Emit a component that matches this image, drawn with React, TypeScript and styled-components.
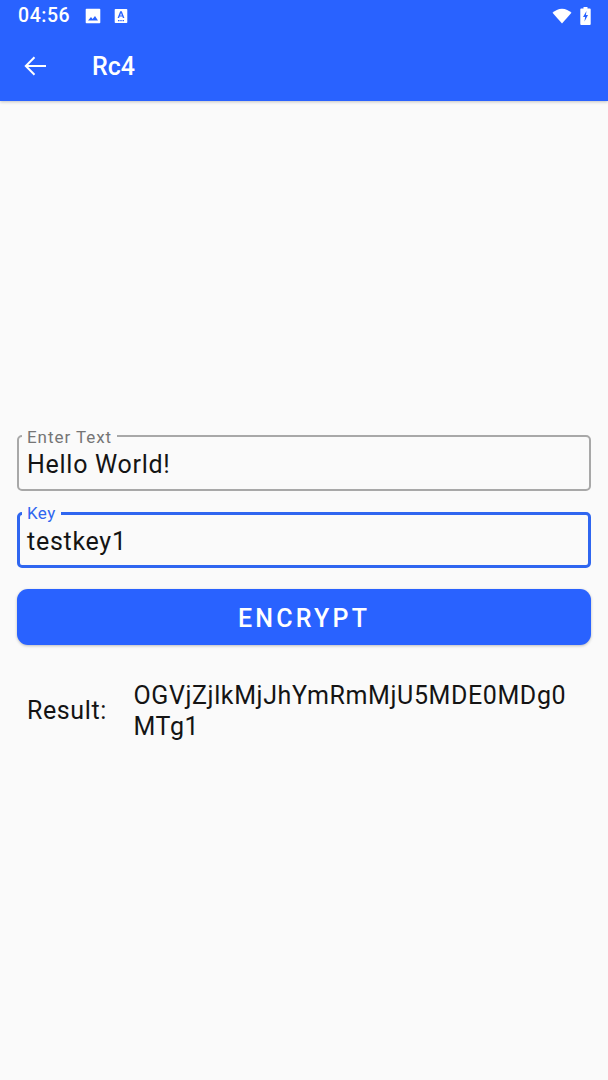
import React from "react";
import styled, { createGlobalStyle } from "styled-components";

const Global = createGlobalStyle`
  html, body { margin: 0; padding: 0; background: #fafafa; }
  body { font-family: Roboto, "Liberation Sans", sans-serif; }
`;

const Page = styled.div`
  width: 608px;
  height: 1080px;
  overflow: hidden;
  background: #fafafa;
  display: flex;
  flex-direction: column;
`;

const Header = styled.header`
  height: 101px;
  background: #2962ff;
  box-shadow: 0 1px 3px rgba(0, 0, 0, 0.22);
  display: flex;
  flex-direction: column;
  color: #fff;
`;

const StatusBar = styled.div`
  height: 32px;
  display: flex;
  align-items: center;
  padding: 0 17px 0 18px;
`;

const Time = styled.span`
  font-size: 19.5px;
  font-weight: 500;
  letter-spacing: 0.55px;
  line-height: 32px;
  width: 67px;
`;

const ImageIcon = styled.svg`
  width: 16px;
  height: 16px;
  display: block;
`;

const AccessIcon = styled.svg`
  width: 14px;
  height: 16px;
  margin-left: 13px;
  display: block;
`;

const StatusRight = styled.div`
  margin-left: auto;
  display: flex;
  align-items: center;
  gap: 8px;
`;

const Toolbar = styled.div`
  height: 69px;
  display: flex;
  align-items: center;
  padding: 0 0 2px 23px;
`;

const BackIcon = styled.svg`
  width: 24px;
  height: 24px;
  display: block;
`;

const Title = styled.h1`
  margin: 2px 0 0 45px;
  font-size: 25px;
  font-weight: 500;
  line-height: 32px;
`;

const Content = styled.main`
  flex: 1;
  display: flex;
  flex-direction: column;
  padding: 334px 17px 0;
  gap: 21px;
`;

const Field = styled.div<{ $focused?: boolean }>`
  position: relative;
  height: 56px;
  box-sizing: border-box;
  border: ${(p) => (p.$focused ? "3px solid #2f66f0" : "2px solid #a8a8a8")};
  border-radius: 5px;
  display: flex;
  align-items: center;
  padding: ${(p) => (p.$focused ? "3px 0 0 7px" : "3px 0 0 8px")};
  font-size: 25px;
  line-height: 32px;
  letter-spacing: 0.72px;
  color: #141414;
`;

const FieldLabel = styled.span<{ $focused?: boolean }>`
  position: absolute;
  top: ${(p) => (p.$focused ? "-12px" : "-10px")};
  left: ${(p) => (p.$focused ? "2px" : "3px")};
  padding: 0 5px;
  background: #fafafa;
  font-size: 17px;
  line-height: 20px;
  letter-spacing: ${(p) => (p.$focused ? "0.4px" : "0.95px")};
  color: ${(p) => (p.$focused ? "#2f66f0" : "#757575")};
`;

const Encrypt = styled.button`
  height: 56px;
  border: 0;
  border-radius: 11px;
  background: #2962ff;
  color: #fff;
  font-family: inherit;
  font-size: 25px;
  font-weight: 500;
  letter-spacing: 3.2px;
  line-height: 52px;
  box-shadow: 0 1px 3px rgba(0, 0, 0, 0.25);
  padding: 4px 0 0;
`;

const ResultRow = styled.div`
  display: flex;
  align-items: center;
  padding: 14px 10px 0;
  font-size: 25px;
  line-height: 31px;
  letter-spacing: 0.6px;
  color: #141414;
`;

const ResultLabel = styled.span`
  width: 106.5px;
  flex: none;
  margin-top: -2px;
`;

const ResultValue = styled.span`
  flex: 1;
  overflow-wrap: anywhere;
`;

export default function App() {
  return (
    <Page>
      <Global />
      <Header>
        <StatusBar>
          <Time>04:56</Time>
          <ImageIcon viewBox="0 0 16 16">
            <path fill="#fff" fillRule="evenodd" d="M1.5 .8h13a.8.8 0 0 1 .8.8v12.800a.8.8 0 0 1-.8.8h-13a.8.8 0 0 1-.8-.8V1.600a.8.8 0 0 1 .8-.8zM3 12.500h10L10 8l-2.400 3-1.600-2z" />
          </ImageIcon>
          <AccessIcon viewBox="0 0 14 16">
            <path fill="#fff" fillRule="evenodd" d="M1.500 1h11a.8.8 0 0 1 .8.8v12.400a.8.8 0 0 1-.8.8h-11a.8.8 0 0 1-.8-.8V1.800A.8.8 0 0 1 1.500 1zM6.200 3.200 3.600 10h1.500l.5-1.400h2.800l.5 1.400h1.500L7.800 3.200zM7 4.900l.9 2.500H6.100zM4 12h1.500v1.200H4zm2.300 0h1.400v1.200H6.300zm2.200 0H10v1.200H8.500z" />
          </AccessIcon>
          <StatusRight>
            <svg width="20" height="16" viewBox="0 0 20 16">
              <path fill="#fff" d="M10 15.500 .5 4.800C3 2.500 6.300 .8 10 .8s7 1.700 9.500 4z" />
            </svg>
            <svg width="11" height="18" viewBox="0 0 11 18">
              <path fill="#fff" fillRule="evenodd" d="M3.500 0h4v1.500h2.300a.9.9 0 0 1 .9.900v14.700a.9.9 0 0 1-.9.900H1.200a.9.900 0 0 1-.9-.9V2.400a.9.9 0 0 1 .9-.9h2.300zM6.500 4 3 10h2.100l-.6 4.500L8 8H5.900z" />
            </svg>
          </StatusRight>
        </StatusBar>
        <Toolbar>
          <BackIcon viewBox="0 0 24 24">
            <path fill="none" stroke="#fff" strokeWidth="2" d="M23 12H2.800M11.500 3.200 2.800 12l8.700 8.800" />
          </BackIcon>
          <Title>Rc4</Title>
        </Toolbar>
      </Header>
      <Content>
        <Field>
          <FieldLabel>Enter Text</FieldLabel>
          Hello World!
        </Field>
        <Field $focused>
          <FieldLabel $focused>Key</FieldLabel>
          testkey1
        </Field>
        <Encrypt>ENCRYPT</Encrypt>
        <ResultRow>
          <ResultLabel>Result:</ResultLabel>
          <ResultValue>OGVjZjlkMjJhYmRmMjU5MDE0MDg0MTg1</ResultValue>
        </ResultRow>
      </Content>
    </Page>
  );
}
